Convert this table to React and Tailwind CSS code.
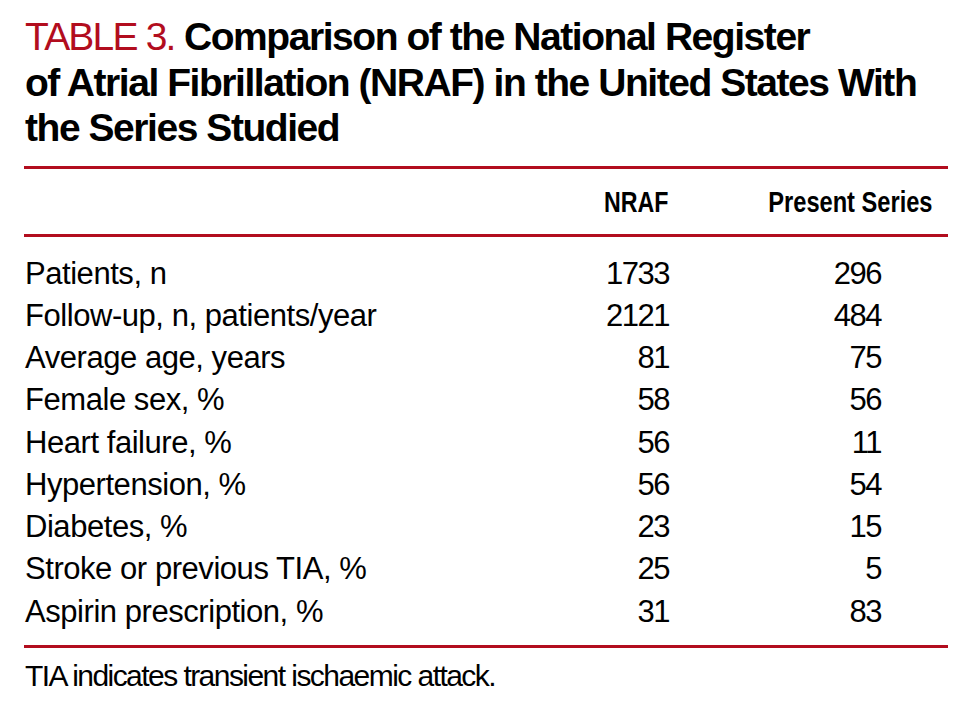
import React from "react";

const rows = [
  ["Patients, n", "1733", "296"],
  ["Follow-up, n, patients/year", "2121", "484"],
  ["Average age, years", "81", "75"],
  ["Female sex, %", "58", "56"],
  ["Heart failure, %", "56", "11"],
  ["Hypertension, %", "56", "54"],
  ["Diabetes, %", "23", "15"],
  ["Stroke or previous TIA, %", "25", "5"],
  ["Aspirin prescription, %", "31", "83"],
];

const font = { fontFamily: '"Liberation Sans", Arial, sans-serif' };

export default function App() {
  return (
    <div className="w-[963px] h-[713px] bg-white text-black overflow-hidden" style={font}>
      <div className="ml-[24px] w-[924px] pt-[14px]">
        <div className="text-[39px] leading-[45.5px] font-bold tracking-[-1.45px] pl-[1px]">
          <span className="font-normal text-[#b20d1e] tracking-[-1.8px]">TABLE 3.</span> Comparison of the National Register
          <br />
          of Atrial Fibrillation (NRAF) in the United States With
          <br />
          the Series Studied
        </div>
        <div className="mt-[15px] h-[3px] bg-[#b20d1e]" />
        <div className="flex h-[65px] pr-[15px] pt-[19.5px] text-[29px] leading-[29px] font-bold">
          <div className="flex-1" />
          <div className="w-[170px] text-right">
            <span className="inline-block origin-right scale-x-[0.8]">NRAF</span>
          </div>
          <div className="w-[264px] text-right">
            <span className="inline-block origin-right scale-x-[0.815]">Present Series</span>
          </div>
        </div>
        <div className="h-[3px] bg-[#b20d1e]" />
        <div className="pt-[16px] pb-[12px] text-[31px] leading-[42.25px]">
          {rows.map(([label, a, b]) => (
            <div key={label} className="flex pr-[15px]">
              <div className="flex-1 pl-[1px] tracking-[-0.45px]">{label}</div>
              <div className="w-[170px] text-right tracking-[-1.5px]">{a}</div>
              <div className="w-[264px] text-right pr-[52px] tracking-[-1.5px]">{b}</div>
            </div>
          ))}
        </div>
        <div className="h-[3px] bg-[#b20d1e]" />
        <div className="mt-[10.5px] pl-[1px] text-[30px] leading-[36px] tracking-[-1.55px]">
          TIA indicates transient ischaemic attack.
        </div>
      </div>
    </div>
  );
}
